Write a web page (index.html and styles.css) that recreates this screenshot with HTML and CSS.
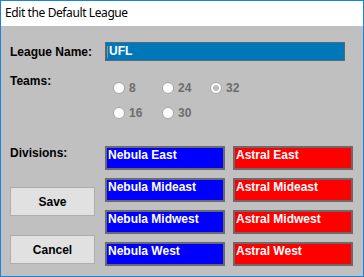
FILE: index.html
```html
<!DOCTYPE html>
<html lang="en">
<head>
  <meta charset="UTF-8">
  <meta name="viewport" content="width=device-width, initial-scale=1.0">
  <title>Edit the Default League</title>
  <link rel="stylesheet" href="styles.css">
</head>
<body>
  <div class="window">
    <div class="titlebar">Edit the Default League</div>

    <div class="content">
      <div class="name-row">
        <div class="label name-label">League Name:</div>
        <div class="name-box"><span class="caret"></span>UFL</div>
      </div>

      <div class="teams-row">
        <div class="label teams-label">Teams:</div>
        <div class="radios">
          <div class="radio"><span class="dot"></span>8</div>
          <div class="radio"><span class="dot"></span>24</div>
          <div class="radio"><span class="dot checked"></span>32</div>
          <div class="radio"><span class="dot"></span>16</div>
          <div class="radio"><span class="dot"></span>30</div>
        </div>
      </div>

      <div class="divisions-row">
        <div class="side">
          <div class="label">Divisions:</div>
          <button class="btn save">Save</button>
          <button class="btn cancel">Cancel</button>
        </div>
        <div class="divisions">
          <div class="div-box blue">Nebula East</div>
          <div class="div-box red">Astral East</div>
          <div class="div-box blue">Nebula Mideast</div>
          <div class="div-box red">Astral Mideast</div>
          <div class="div-box blue">Nebula Midwest</div>
          <div class="div-box red">Astral Midwest</div>
          <div class="div-box blue">Nebula West</div>
          <div class="div-box red">Astral West</div>
        </div>
      </div>
    </div>
  </div>
</body>
</html>
```

FILE: styles.css
```css
html, body {
  margin: 0;
  padding: 0;
}
body {
  font-family: "Liberation Sans", Arial, sans-serif;
  font-size: 12px;
}
.window {
  width: 364px;
  height: 277px;
  box-sizing: border-box;
  border: 1px solid #1883d7;
  display: flex;
  flex-direction: column;
}
.titlebar {
  height: 25px;
  line-height: 24px;
  padding-left: 4px;
  background: #fff;
  color: #000;
  font-family: "Noto Sans", sans-serif;
  font-size: 12px;
  letter-spacing: -0.4px;
}
.content {
  flex: 1;
  background: #c0c0c0;
  padding-left: 9px;
}
.label {
  font-weight: bold;
  color: #000;
  line-height: 14px;
}
.name-row {
  display: flex;
  align-items: center;
  margin-top: 16px;
}
.name-label {
  width: 95px;
}
.name-box {
  width: 240px;
  height: 19px;
  box-sizing: border-box;
  border: 1px solid #566874;
  background: #0077b8;
  color: #fff;
  font-weight: bold;
  line-height: 17px;
  padding-left: 1px;
  display: flex;
  align-items: center;
}
.caret {
  width: 1px;
  height: 12px;
  background: #c8824a;
  margin-right: 1px;
}
.teams-row {
  display: flex;
  margin-top: 13px;
}
.teams-label {
  width: 103px;
}
.radios {
  display: grid;
  grid-template-columns: 49px 48px 48px;
  row-gap: 13px;
  margin-top: 8px;
}
.radio {
  display: flex;
  align-items: center;
  gap: 4px;
  height: 12px;
  color: #6d6d6d;
  font-weight: bold;
}
.dot {
  width: 12px;
  height: 12px;
  box-sizing: border-box;
  border: 1px solid #a6a6a6;
  border-radius: 50%;
  background: #fff;
  display: flex;
  align-items: center;
  justify-content: center;
}
.dot.checked::after {
  content: "";
  width: 6px;
  height: 6px;
  border-radius: 50%;
  background: #bdbdbd;
}
.divisions-row {
  display: flex;
  margin-top: 27px;
}
.side {
  width: 95px;
  display: flex;
  flex-direction: column;
}
.btn {
  width: 85px;
  height: 29px;
  border: 1px solid #adadad;
  background: #e1e1e1;
  font-family: "Liberation Sans", Arial, sans-serif;
  font-size: 12px;
  font-weight: bold;
  color: #000;
  padding: 0;
}
.save {
  margin-top: 27px;
}
.cancel {
  margin-top: 19px;
}
.divisions {
  display: grid;
  grid-template-columns: 120px 120px;
  grid-auto-rows: 24px;
  gap: 8px;
}
.div-box {
  box-sizing: border-box;
  border: 2px solid #6a6a6a;
  color: #fff;
  font-weight: bold;
  line-height: 14px;
  padding-left: 1px;
}
.blue {
  background: #0000ff;
}
.red {
  background: #ff0000;
}
```
